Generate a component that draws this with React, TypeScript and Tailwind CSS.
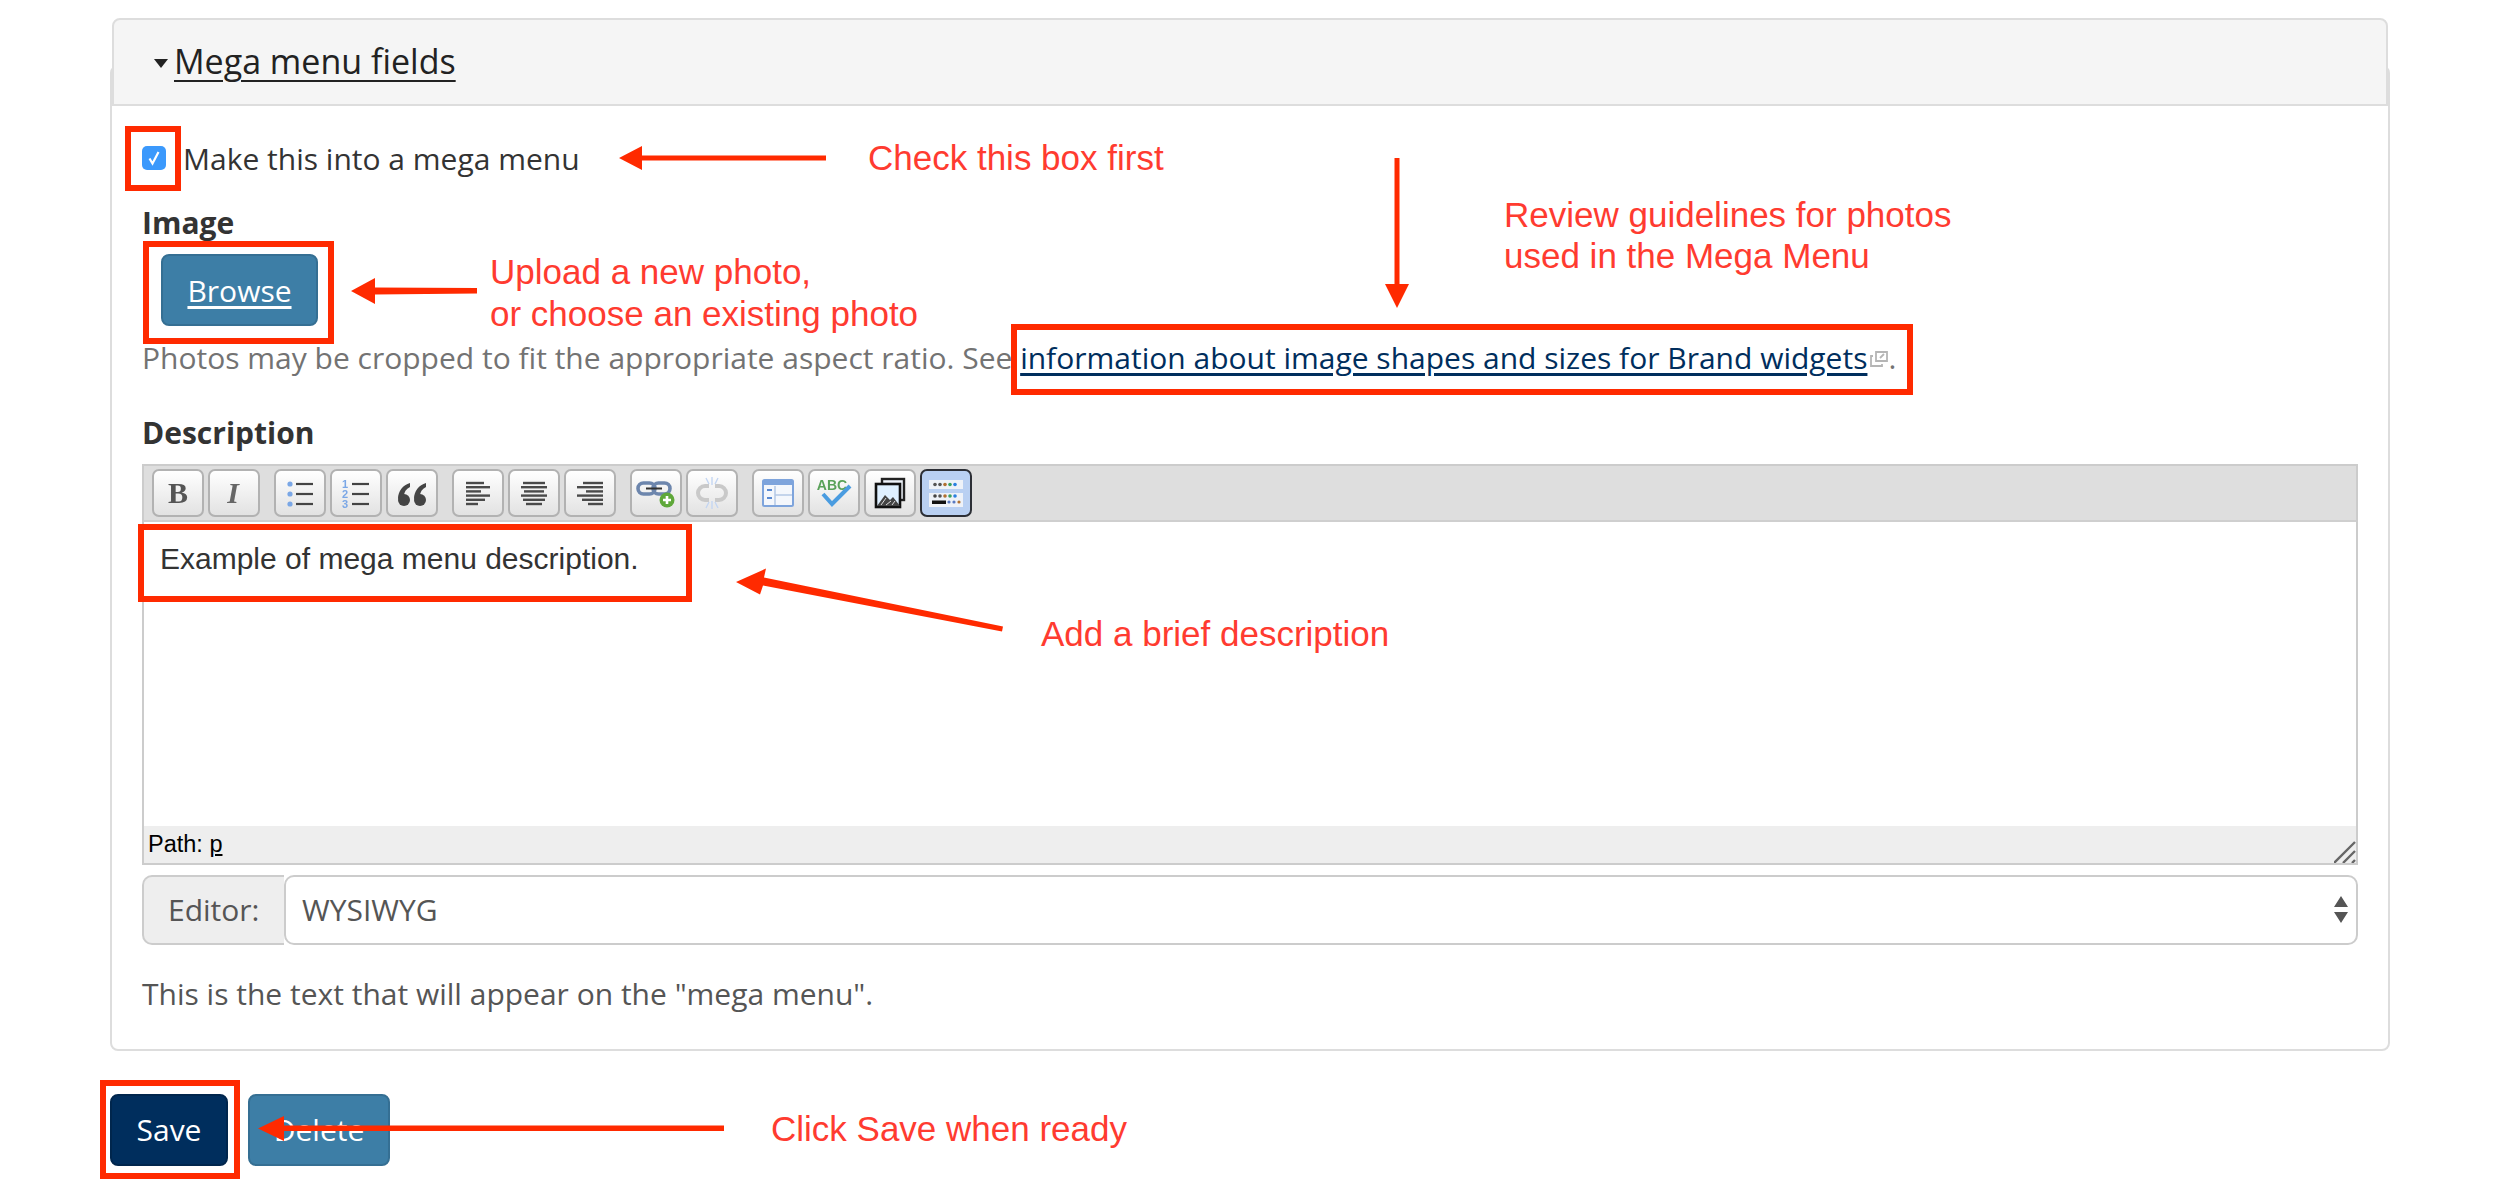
const RED = "#ff2a00";

function Frame({ className }: { className: string }) {
  return <div className={`absolute border-[6px] border-[#ff2a00] ${className}`} />;
}

function Note({ className, children }: { className: string; children: React.ReactNode }) {
  return (
    <div className={`absolute whitespace-nowrap font-['Liberation_Sans',sans-serif] text-[35px] leading-[42px] text-[#ff3b30] ${className}`}>
      {children}
    </div>
  );
}

function ToolButton({ children, active, className = "" }: { children: React.ReactNode; active?: boolean; className?: string }) {
  return (
    <div
      className={`h-12 w-[52px] shrink-0 rounded-[7px] border-2 ${
        active ? "border-[#2c2f36] bg-[#b9d0f2]" : "border-[#b2b2b2] bg-gradient-to-b from-white to-[#e2e2e2]"
      } ${className}`}
    >
      <svg viewBox="0 0 48 44" className="h-full w-full blur-[0.5px]">
        {children}
      </svg>
    </div>
  );
}

function Lines({ rows }: { rows: [number, number][] }) {
  return (
    <g stroke="#4a4a4a" strokeWidth="2.4">
      {rows.map(([x1, x2], i) => (
        <line key={i} x1={x1} x2={x2} y1={12 + i * 4.2} y2={12 + i * 4.2} />
      ))}
    </g>
  );
}

function Toolbar() {
  return (
    <div className="flex h-[56px] items-center border-b-2 border-[#cfcfcf] bg-[#dedede] pl-2">
      <ToolButton>
        <text x="24" y="32" textAnchor="middle" fontFamily="Liberation Serif, serif" fontWeight="700" fontSize="30" fill="#555">B</text>
      </ToolButton>
      <ToolButton className="ml-1">
        <text x="23" y="32" textAnchor="middle" fontFamily="Liberation Serif, serif" fontStyle="italic" fontWeight="700" fontSize="30" fill="#666">I</text>
      </ToolButton>

      <ToolButton className="ml-[14px]">
        <g fill="#7aa7e6">
          <circle cx="14" cy="13" r="2.6" />
          <circle cx="14" cy="23" r="2.6" />
          <circle cx="14" cy="33" r="2.6" />
        </g>
        <g stroke="#444" strokeWidth="2.2">
          <line x1="20" x2="37" y1="13" y2="13" />
          <line x1="20" x2="37" y1="23" y2="23" />
          <line x1="20" x2="37" y1="33" y2="33" />
        </g>
      </ToolButton>
      <ToolButton className="ml-1">
        <g fill="#7aa7e6" fontFamily="Liberation Sans, sans-serif" fontSize="11" fontWeight="700">
          <text x="10" y="17">1</text>
          <text x="10" y="27">2</text>
          <text x="10" y="37">3</text>
        </g>
        <g stroke="#444" strokeWidth="2.2">
          <line x1="20" x2="37" y1="13" y2="13" />
          <line x1="20" x2="37" y1="23" y2="23" />
          <line x1="20" x2="37" y1="33" y2="33" />
        </g>
      </ToolButton>
      <ToolButton className="ml-1">
        <g fill="#444">
          <circle cx="16" cy="29" r="6" />
          <circle cx="32" cy="29" r="6" />
          <path d="M10 28 C10 20 15 14 22 12 L22 16 C18 18 16 21 16 25 Z" />
          <path d="M26 28 C26 20 31 14 38 12 L38 16 C34 18 32 21 32 25 Z" />
        </g>
      </ToolButton>

      <ToolButton className="ml-[14px]">
        <Lines rows={[[12, 30], [12, 36], [12, 27], [12, 36], [12, 31], [12, 24]]} />
      </ToolButton>
      <ToolButton className="ml-1">
        <Lines rows={[[13, 35], [11, 37], [14, 34], [11, 37], [13, 35], [16, 32]]} />
      </ToolButton>
      <ToolButton className="ml-1">
        <Lines rows={[[17, 37], [11, 37], [20, 37], [11, 37], [16, 37], [22, 37]]} />
      </ToolButton>

      <ToolButton className="ml-[14px]">
        <g fill="none" stroke="#6d86ad" strokeWidth="3.6">
          <rect x="6" y="12" width="17" height="11" rx="5.5" />
          <rect x="21" y="12" width="17" height="11" rx="5.5" />
        </g>
        <line x1="14" x2="30" y1="17.5" y2="17.5" stroke="#333" strokeWidth="2" />
        <circle cx="35" cy="29" r="7.5" fill="#5fa83a" />
        <path d="M35 25v8M31 29h8" stroke="#fff" strokeWidth="2.6" />
      </ToolButton>
      <ToolButton className="ml-1">
        <g fill="none" stroke="#c9c9c9" strokeWidth="4">
          <path d="M21 15h-4a7 7 0 0 0 0 14h4" />
          <path d="M27 15h4a7 7 0 0 1 0 14h-4" />
        </g>
        <g stroke="#c4d6f2" strokeWidth="1.4">
          <path d="M24 6v8M24 30v8M18 7l3 6M30 7l-3 6M18 37l3-6M30 37l-3-6" />
        </g>
      </ToolButton>

      <ToolButton className="ml-[14px]">
        <rect x="9" y="9" width="30" height="26" rx="1.5" fill="#f4f7fc" stroke="#7ea4dc" strokeWidth="2" />
        <rect x="9" y="9" width="30" height="5" fill="#7ea4dc" />
        <g fill="#5a8ad2">
          <rect x="13" y="18" width="5" height="2" />
          <rect x="13" y="26" width="5" height="2" />
        </g>
        <g stroke="#b5c8e6" strokeWidth="1.5">
          <line x1="21" x2="21" y1="15" y2="34" />
          <line x1="21" x2="38" y1="24" y2="24" />
        </g>
      </ToolButton>
      <ToolButton className="ml-1">
        <text x="22" y="19" textAnchor="middle" fontFamily="Liberation Sans, sans-serif" fontWeight="700" fontSize="14" fill="#5aa25a">ABC</text>
        <path d="M13 23l9 10L40 15" fill="none" stroke="#4a9ce0" strokeWidth="4" />
      </ToolButton>
      <ToolButton className="ml-1">
        <rect x="16" y="8" width="22" height="21" fill="#eef3fa" stroke="#222" strokeWidth="2.4" />
        <rect x="10" y="13" width="24" height="23" fill="#dff0ff" stroke="#111" strokeWidth="2.6" />
        <path d="M11 35l8-11 5 5 3-3 7 9z" fill="#444" />
        <path d="M15 34l5-7M20 34l5-4M26 34l3-4" stroke="#ddd" strokeWidth="1" />
      </ToolButton>
      <ToolButton active className="ml-1">
        <rect x="7" y="9" width="34" height="9" fill="#eef2f8" />
        <rect x="7" y="22" width="34" height="14" fill="#eef2f8" />
        <g>
          <circle cx="13" cy="13.5" r="1.8" fill="#555" />
          <circle cx="18" cy="13.5" r="1.8" fill="#555" />
          <circle cx="23" cy="13.5" r="1.8" fill="#b07030" />
          <circle cx="28" cy="13.5" r="1.8" fill="#3aa060" />
          <circle cx="33" cy="13.5" r="1.8" fill="#2a80e0" />
          <circle cx="13" cy="25" r="1.8" fill="#444" />
          <circle cx="18" cy="25" r="1.8" fill="#555" />
          <circle cx="23" cy="25" r="1.8" fill="#b07030" />
          <circle cx="28" cy="25" r="1.8" fill="#3aa060" />
          <circle cx="33" cy="25" r="1.8" fill="#2a80e0" />
          <rect x="10" y="29.5" width="14" height="3.5" fill="#111" />
          <circle cx="27" cy="31" r="1.6" fill="#5a7ac0" />
          <circle cx="32" cy="31" r="1.6" fill="#5a7ac0" />
          <circle cx="37" cy="31" r="1.6" fill="#b07030" />
        </g>
      </ToolButton>
    </div>
  );
}

function Editor() {
  return (
    <div className="border-2 border-[#cccccc]">
      <Toolbar />
      <div className="h-[304px] bg-white pl-[16px] pt-[17px] font-['Liberation_Sans',sans-serif] text-[30px] leading-[40px] text-[#333]">
        Example of mega menu description.
      </div>
      <div className="relative flex h-[37px] items-center bg-[#eeeeee] pl-1 font-['Liberation_Sans',sans-serif] text-[23.5px] text-black">
        <span>Path:&nbsp;</span>
        <span className="underline">p</span>
        <svg viewBox="0 0 22 22" className="absolute bottom-0 right-0 h-[22px] w-[22px]" stroke="#666" strokeWidth="2.4">
          <path d="M0 22L21 1M9 22L21 10M18 22l3-3" />
        </svg>
      </div>
    </div>
  );
}

function EditorSelect() {
  return (
    <div className="mt-[10px] flex h-[70px] text-[30px] text-[#555]">
      <div className="flex w-[142px] items-center rounded-l-[10px] border-2 border-r-0 border-[#cccccc] bg-[#eeeeee] pb-[2px] pl-[24px]">Editor:</div>
      <div className="flex flex-1 items-center justify-between rounded-[10px] border-2 border-[#cccccc] bg-white pl-[16px] pr-[8px]">
        <span className="pb-[2px]">WYSIWYG</span>
        <svg viewBox="0 0 14 28" className="h-7 w-3.5" fill="#555">
          <path d="M7 0l7 11H0zM0 16h14L7 27z" />
        </svg>
      </div>
    </div>
  );
}

export default function App() {
  return (
    <div className="relative h-[1186px] w-[2508px] overflow-hidden bg-white font-['Open_Sans',sans-serif] text-[#333]">
      <div className="ml-[110px] w-[2280px] pt-[18px]">
        {/* panel border starts behind the heading, which sits 2px inside it */}
        <div className="mt-[47px] rounded-[8px] border-2 border-[#dddddd]">
          <div className="relative -mt-[49px] flex h-[88px] items-center rounded-t-[8px] border-2 border-[#dddddd] bg-[#f5f5f5] pb-[3px] pl-[40px] text-[34px] leading-none text-[#222]">
            <svg viewBox="0 0 14 9" className="mr-[6px] mt-[6px] h-[9px] w-[14px]" fill="#222">
              <path d="M0 0h14L7 9z" />
            </svg>
            <span className="underline decoration-2 underline-offset-[6px]">Mega menu fields</span>
          </div>

          <div className="h-[943px] px-[30px] pt-[32px]">
            <div className="flex h-[40px] items-center">
              <div className="relative mr-[17px] flex h-6 w-6 items-center justify-center rounded-[5px] bg-[#3b99fc]">
                <svg viewBox="0 0 24 24" className="h-6 w-6" fill="none" stroke="#fff" strokeWidth="2.2">
                  <path d="M7.5 12.5l3 5L16.5 6" />
                </svg>
              </div>
              <span className="text-[30px] text-[#333]">Make this into a mega menu</span>
            </div>

            <div className="mt-[25px] text-[30px] font-bold leading-[40px]">Image</div>
            <a className="mt-[11px] ml-[19px] flex h-[72px] w-[157px] items-center justify-center rounded-[8px] border-2 border-[#356f93] bg-[#3d7ea6] text-[30px] text-white underline underline-offset-[4px]">
              Browse
            </a>
            <div className="mt-[12px] flex items-center text-[30px] leading-[40px] text-[#737373]">
              <span>Photos may be cropped to fit the appropriate aspect ratio. See&nbsp;</span>
              <span className="text-[#002e5d] underline underline-offset-[4px]">information about image shapes and sizes for Brand widgets</span>
              <svg viewBox="0 0 18 18" className="ml-[3px] h-[18px] w-[18px]" fill="none" stroke="#b5b5b5" strokeWidth="1.8">
                <path d="M6 3h11v9H6zM3 7H1v10h11v-2M10 9l4-4" />
              </svg>
              <span>.</span>
            </div>

            <div className="mt-[35px] text-[30px] font-bold leading-[40px]">Description</div>
            <div className="mt-[11px]">
              <Editor />
              <EditorSelect />
            </div>
            <p className="mt-[29px] text-[30px] leading-[40px] text-[#555]">This is the text that will appear on the "mega menu".</p>
          </div>
        </div>

        <div className="mt-[43px] flex gap-5 text-[30px] text-white">
          <button className="h-[72px] w-[118px] rounded-[8px] border-2 border-[#00264d] bg-[#002e5d] pb-[2px]">Save</button>
          <button className="h-[72px] w-[142px] rounded-[8px] border-2 border-[#356f93] bg-[#3d7ea6] pb-[2px]">Delete</button>
        </div>
      </div>

      {/* red markup drawn on top of the screenshot */}
      <Frame className="left-[125px] top-[126px] h-[65px] w-[56px]" />
      <Frame className="left-[143px] top-[241px] h-[103px] w-[191px]" />
      <Frame className="left-[1011px] top-[324px] h-[71px] w-[902px]" />
      <Frame className="left-[138px] top-[524px] h-[78px] w-[554px]" />
      <Frame className="left-[100px] top-[1080px] h-[99px] w-[140px]" />

      <svg className="absolute left-0 top-0 h-[1186px] w-[2508px]" viewBox="0 0 2508 1186" fill={RED} stroke="none">
        <path d="M826 155.5v5H642v9.5l-23-12 23-12v9.5z" />
        <path d="M477 288v5.5l-102 1v9.5l-24-13 24-13v9.5z" />
        <path d="M1394.5 158h5v126h9.5l-12 24-12-24h9.5z" />
        <path d="M1003 626.5l-1 5-239-46 -3 9-24-12.5 30-13.5-2 9z" />
        <path d="M724 1125.5v5.5H284v10l-26-12.5 26-12.5v9.5z" />
      </svg>

      <Note className="left-[868px] top-[137px]">Check this box first</Note>
      <Note className="left-[490px] top-[251px]">Upload a new photo,</Note>
      <Note className="left-[490px] top-[293px]">or choose an existing photo</Note>
      <Note className="left-[1504px] top-[194px]">Review guidelines for photos</Note>
      <Note className="left-[1504px] top-[235px]">used in the Mega Menu</Note>
      <Note className="left-[1041px] top-[613px]">Add a brief description</Note>
      <Note className="left-[771px] top-[1108px]">Click Save when ready</Note>
    </div>
  );
}
